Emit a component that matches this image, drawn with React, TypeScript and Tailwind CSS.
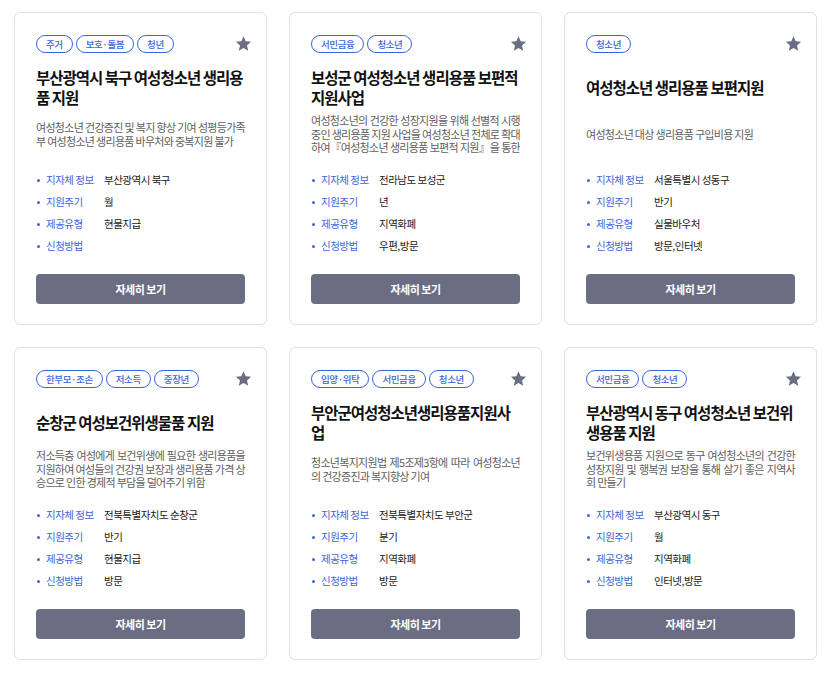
type Policy = {
  tags: string[];
  title: string;
  desc: string;
  region: string;
  cycle: string;
  kind: string;
  apply: string;
};

const policies: Policy[] = [
  {
    tags: ['주거', '보호·돌봄', '청년'],
    title: '부산광역시 북구 여성청소년 생리용품 지원',
    desc: '여성청소년 건강증진 및 복지 향상 기여 성평등가족부 여성청소년 생리용품 바우처와 중복지원 불가',
    region: '부산광역시 북구',
    cycle: '월',
    kind: '현물지급',
    apply: '',
  },
  {
    tags: ['서민금융', '청소년'],
    title: '보성군 여성청소년 생리용품 보편적 지원사업',
    desc: '여성청소년의 건강한 성장지원을 위해 선별적 시행중인 생리용품 지원 사업을 여성청소년 전체로 확대하여『여성청소년 생리용품 보편적 지원』을 통한 여성청소년 건강권 보장',
    region: '전라남도 보성군',
    cycle: '년',
    kind: '지역화폐',
    apply: '우편,방문',
  },
  {
    tags: ['청소년'],
    title: '여성청소년 생리용품 보편지원',
    desc: '여성청소년 대상 생리용품 구입비용 지원',
    region: '서울특별시 성동구',
    cycle: '반기',
    kind: '실물바우처',
    apply: '방문,인터넷',
  },
  {
    tags: ['한부모·조손', '저소득', '중장년'],
    title: '순창군 여성보건위생물품 지원',
    desc: '저소득층 여성에게 보건위생에 필요한 생리용품을 지원하여 여성들의 건강권 보장과 생리용품 가격 상승으로 인한 경제적 부담을 덜어주기 위함',
    region: '전북특별자치도 순창군',
    cycle: '반기',
    kind: '현물지급',
    apply: '방문',
  },
  {
    tags: ['입양·위탁', '서민금융', '청소년'],
    title: '부안군여성청소년생리용품지원사업',
    desc: '청소년복지지원법 제5조제3항에 따라 여성청소년의 건강증진과 복지향상 기여',
    region: '전북특별자치도 부안군',
    cycle: '분기',
    kind: '지역화폐',
    apply: '방문',
  },
  {
    tags: ['서민금융', '청소년'],
    title: '부산광역시 동구 여성청소년 보건위생용품 지원',
    desc: '보건위생용품 지원으로 동구 여성청소년의 건강한 성장지원 및 행복권 보장을 통해 살기 좋은 지역사회 만들기',
    region: '부산광역시 동구',
    cycle: '월',
    kind: '지역화폐',
    apply: '인터넷,방문',
  },
];

const StarIcon = () => (
  <svg width="17" height="17" viewBox="0 0 24 24" className="shrink-0">
    <path
      d="M12 1.8l3.05 7.1 7.7.68-5.84 5.07 1.75 7.53L12 18.2l-6.66 3.98 1.75-7.53-5.84-5.07 7.7-.68z"
      fill="#6b6e82"
    />
  </svg>
);

const InfoRow = ({ label, value }: { label: string; value: string }) => (
  <div className="flex h-[22px] items-center">
    <span className="ml-[1px] mr-[6px] h-[3px] w-[3px] rounded-full bg-[#3d66dc]" />
    <span className="w-[58px] text-[10.5px] tracking-[-0.5px] text-[#3d66dc]">{label}</span>
    <span className="text-[10.5px] tracking-[-0.5px] text-[#1a1a1a]">{value}</span>
  </div>
);

const PolicyCard = ({ p }: { p: Policy }) => {
  // only long descriptions get cut after 3 lines
  const long = p.desc.length > 85;

  return (
    <div className="flex flex-col rounded-[6px] border border-[#e1e1e4] bg-white px-[21px] pb-[20px] pt-[22px]">
      {/* tags + bookmark */}
      <div className="flex h-[18px] items-center justify-between">
        <div className="flex gap-[3px]">
          {p.tags.map((t) => (
            <span
              key={t}
              className="flex h-[18px] items-center rounded-full border border-[#3b63dc] px-[9px] text-[9.5px] font-medium tracking-[-0.4px] text-[#3b63dc]"
            >
              {t}
            </span>
          ))}
        </div>
        <div className="-mr-[7px] -mt-[2px]">
          <StarIcon />
        </div>
      </div>

      <div className="mt-[14px] flex h-[40px] items-center">
        <h3 className="text-[15.5px] font-bold leading-[20px] tracking-[-1px] text-[#111]">{p.title}</h3>
      </div>

      <div className="mt-[7px] flex h-[41px] items-center">
        <p
          className={
            long
              ? 'h-[41px] w-full overflow-hidden text-justify text-[11px] leading-[13.5px] tracking-[-0.7px] text-[#606060]'
              : 'w-full text-justify text-[11px] leading-[13.5px] tracking-[-0.7px] text-[#606060]'
          }
        >
          {p.desc}
        </p>
      </div>

      <div className="mt-[14px] flex flex-col">
        <InfoRow label="지자체 정보" value={p.region} />
        <InfoRow label="지원주기" value={p.cycle} />
        <InfoRow label="제공유형" value={p.kind} />
        <InfoRow label="신청방법" value={p.apply} />
      </div>

      <button className="mt-[17px] flex h-[30px] items-center justify-center rounded-[4px] bg-[#6b6e82] text-[11px] font-bold tracking-[-0.5px] text-white">
        자세히 보기
      </button>
    </div>
  );
};

export default function App() {
  return (
    <div
      className="min-h-screen bg-white px-[14px] pt-[12px]"
      style={{ fontFamily: '"Noto Sans CJK KR", "Noto Sans", sans-serif' }}
    >
      <div className="grid grid-cols-3 gap-[22px]">
        {policies.map((p) => (
          <PolicyCard key={p.title} p={p} />
        ))}
      </div>
    </div>
  );
}
